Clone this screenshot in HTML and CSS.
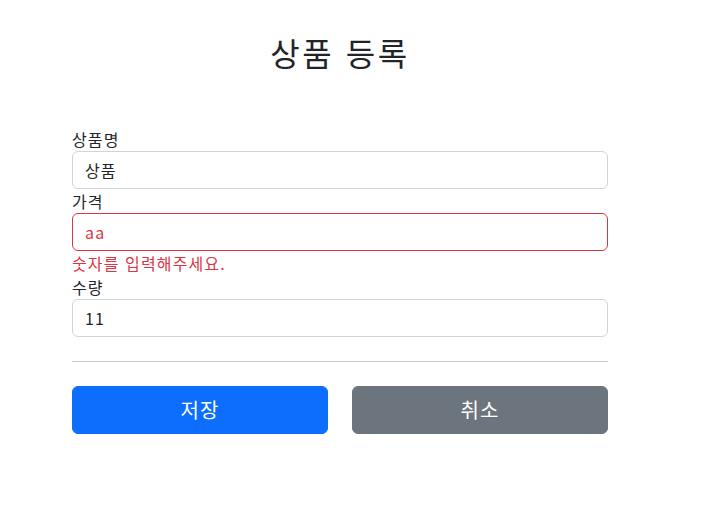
FILE: index.html
```html
<!DOCTYPE html>
<html lang="ko">
<head>
<meta charset="utf-8">
<title>상품 등록</title>
<link rel="stylesheet" href="styles.css">
</head>
<body>
<div class="container">
  <div class="header">
    <h2 class="title">상품 등록</h2>
  </div>
  <form class="form">
    <div class="field">
      <label class="label" for="itemName">상품명</label>
      <input class="control" id="itemName" type="text" value="상품">
    </div>
    <div class="field">
      <label class="label" for="price">가격</label>
      <input class="control field-error" id="price" type="text" value="aa">
      <div class="error-text">숫자를 입력해주세요.</div>
    </div>
    <div class="field">
      <label class="label" for="quantity">수량</label>
      <input class="control" id="quantity" type="text" value="11">
    </div>
    <hr class="divider">
    <div class="actions">
      <button class="btn btn-primary" type="button">저장</button>
      <button class="btn btn-secondary" type="button">취소</button>
    </div>
  </form>
</div>
</body>
</html>
```
FILE: styles.css
```css
* { box-sizing: border-box; }
html, body {
  margin: 0;
  padding: 0;
  background: #fff;
}
body {
  font-family: "Noto Sans CJK KR", "Noto Sans", sans-serif;
  font-size: 16px;
  line-height: 1.5;
  color: #212529;
  letter-spacing: 0.07em;
}
.container {
  width: 536px;
  margin-left: 72px;
}
.header {
  padding: 33px 0 48px;
  text-align: center;
}
.title {
  margin: 0 0 8px;
  font-size: 32px;
  font-weight: 400;
  line-height: 1.2;
  letter-spacing: 0.08em;
}
.form { margin: 0; }
.field { display: block; }
.label {
  display: block;
  line-height: 24px;
}
.control {
  display: block;
  width: 100%;
  height: 38px;
  padding: 6px 12px;
  font-family: inherit;
  font-size: 16px;
  line-height: 24px;
  letter-spacing: inherit;
  color: #212529;
  background: #fff;
  border: 1px solid #ced4da;
  border-radius: 6px;
  outline: none;
}
.control.field-error {
  border-color: #dc3545;
  color: #dc3545;
}
.error-text {
  color: #dc3545;
  line-height: 24px;
}
.divider {
  margin: 24px 0;
  border: 0;
  border-top: 1px solid #c8c9ca;
  height: 0;
}
.actions {
  display: grid;
  grid-template-columns: 1fr 1fr;
  gap: 24px;
}
.btn {
  height: 48px;
  padding: 8px 16px;
  font-family: inherit;
  font-size: 20px;
  line-height: 30px;
  letter-spacing: inherit;
  color: #fff;
  border: 1px solid transparent;
  border-radius: 6px;
  cursor: pointer;
}
.btn-primary { background: #0d6efd; border-color: #0d6efd; }
.btn-secondary { background: #6c757d; border-color: #6c757d; }
```
